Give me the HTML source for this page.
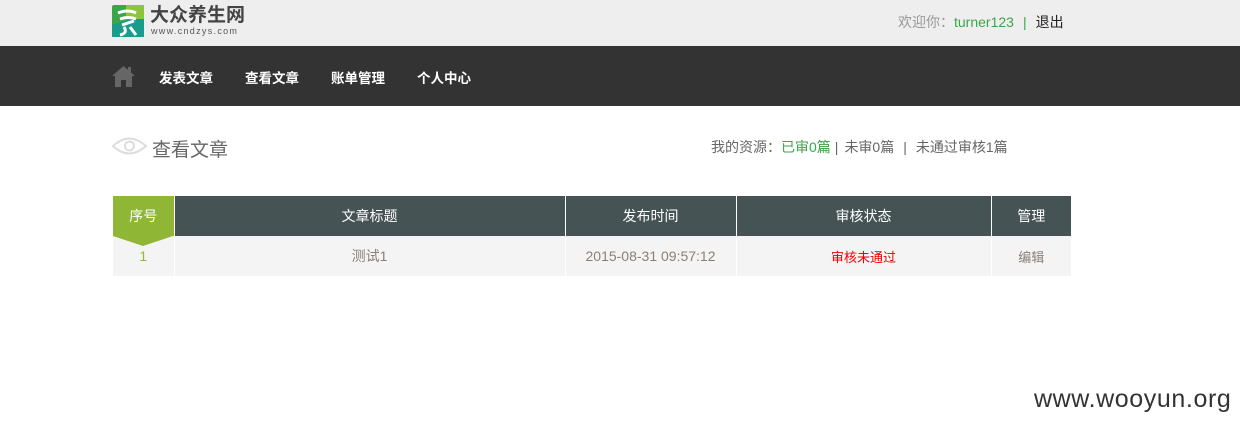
<!DOCTYPE html>
<html><head><meta charset="utf-8"><style>
*{margin:0;padding:0;box-sizing:border-box}
body{width:1240px;height:429px;background:#fff;font-family:"Liberation Sans","Noto Sans CJK SC",sans-serif;position:relative;overflow:hidden}
.top{height:46px;background:#eeeeee;position:relative}
.nav{height:60px;background:#333333;position:relative}
.nav a{position:absolute;top:21px;color:#fff;font-size:14px;font-weight:bold;text-decoration:none}
.abs{position:absolute;white-space:nowrap}
table{position:absolute;left:113px;top:196px;border-collapse:collapse;font-size:14px;table-layout:fixed}
th{background:#465354;color:#fff;height:40px;font-weight:normal;border-left:1px solid #fff}
td{background:#f4f4f4;height:40px;text-align:center;color:#8a7f77;border-left:1px solid #fff;font-size:14px}
</style></head><body>
<div class="top">
 <svg class="abs" style="left:112px;top:5px" width="32" height="32" viewBox="0 0 32 32"><rect width="32" height="32" rx="2" fill="#3aa54a"/><path d="M0 20 L32 10 V32 H0Z" fill="#1a9b8c"/><rect x="14" width="18" height="14" fill="#8cc43d"/><path d="M6 8 Q16 4 24 8 M8 14 Q16 11 24 14 M10 20 L22 16 M12 22 Q16 28 8 30 M18 22 L24 30" stroke="#fff" stroke-width="3" fill="none"/></svg>
 <div class="abs" style="left:150px;top:5px;font-size:19px;line-height:22px;font-weight:bold;color:#444;letter-spacing:0px">大众养生网</div>
 <div class="abs" style="left:151px;top:26px;font-size:9px;line-height:10px;color:#555;letter-spacing:1.3px">www.cndzys.com</div>
 <div class="abs" style="left:898px;top:12px;font-size:14px;color:#999">欢迎你：<span style="color:#3aa54a">turner123</span><span style="color:#3aa54a;margin:0 9px">|</span><span style="color:#222">退出</span></div>
</div>
<div class="nav">
 <svg class="abs" style="left:112px;top:19px" width="23" height="22" viewBox="0 0 23 22"><path d="M11.5 1 L0 11 H3 V22 H9 V15 H14 V22 H20 V11 H23Z" fill="#666"/><rect x="16" y="2" width="3" height="6" fill="#666"/></svg>
 <a style="left:159px;font-size:13.5px">发表文章</a><a style="left:245px;font-size:13.5px">查看文章</a><a style="left:331px;font-size:13.5px">账单管理</a><a style="left:417px;font-size:13.5px">个人中心</a>
</div>
<svg class="abs" style="left:112px;top:137px" width="35" height="18" viewBox="0 0 35 18"><path d="M1 9 Q17 -6 34 9 Q17 24 1 9Z" fill="none" stroke="#ddd" stroke-width="2"/><circle cx="17.5" cy="9" r="4.5" fill="none" stroke="#ddd" stroke-width="2"/></svg>
<div class="abs" style="left:152px;top:135px;font-size:19px;color:#666">查看文章</div>
<div class="abs" style="left:711px;top:137px;font-size:14px;color:#666">我的资源：<span style="color:#3aa54a">已审0篇</span><span style="margin:0 6px 0 4px">|</span>未审0篇<span style="margin:0 9px">|</span>未通过审核1篇</div>
<table>
<colgroup><col style="width:61px"><col style="width:391px"><col style="width:171px"><col style="width:255px"><col style="width:80px"></colgroup>
<tr><th style="background:#8fb735;border-left:none">序号</th><th>文章标题</th><th>发布时间</th><th>审核状态</th><th>管理</th></tr>
<tr><td style="border-left:none;color:#8fb735">1</td><td>测试1</td><td>2015-08-31 09:57:12</td><td style="color:#e00;font-size:13px">审核未通过</td><td style="font-size:13px">编辑</td></tr>
</table>
<svg class="abs" style="left:113px;top:236px" width="60" height="10"><path d="M0 0 H60 L30 10Z" fill="#8fb735"/></svg>
<div class="abs" style="left:1034px;top:385px;font-size:25px;color:#333;letter-spacing:0.6px">www.wooyun.org</div>
</body></html>
